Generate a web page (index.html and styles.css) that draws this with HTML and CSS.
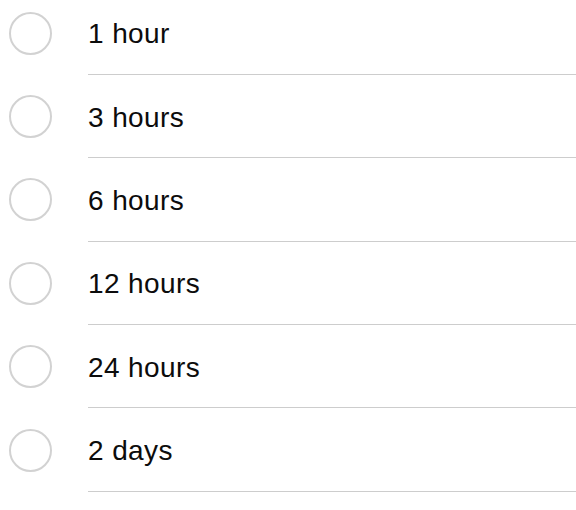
FILE: index.html
```html
<!DOCTYPE html>
<html lang="en">
<head>
  <title>Duration</title>
  <meta charset="UTF-8">
  <meta name="viewport" content="width=device-width, initial-scale=1">
  <link rel="stylesheet" href="styles.css">
</head>
<body>
  <ul class="options">
    <li class="option"><span class="radio"></span><span class="label">1 hour</span></li>
    <li class="option"><span class="radio"></span><span class="label">3 hours</span></li>
    <li class="option"><span class="radio"></span><span class="label">6 hours</span></li>
    <li class="option"><span class="radio"></span><span class="label">12 hours</span></li>
    <li class="option"><span class="radio"></span><span class="label">24 hours</span></li>
    <li class="option"><span class="radio"></span><span class="label">2 days</span></li>
  </ul>
</body>
</html>
```

FILE: styles.css
```css
/* page */
body {
  margin: 0;
  background: #fff;
  font-family: "Liberation Sans", Arial, Helvetica, sans-serif;
  color: #0c0c0c;
  overflow: hidden;
}

/* list of choices */
.options {
  list-style: none;
  margin: -8.5px 0 0 0;
  padding: 0;
}

.option {
  display: flex;
  align-items: stretch;
  height: 83.4px;
}

/* round radio button */
.radio {
  flex: 0 0 auto;
  box-sizing: border-box;
  width: 43px;
  height: 43px;
  margin: auto 36px auto 9px;
  border: 2.5px solid #d2d2d2;
  border-radius: 50%;
}

/* label with divider under it */
.label {
  flex: 1;
  display: flex;
  align-items: center;
  padding-top: 3px;
  font-size: 28px;
  letter-spacing: 0.4px;
  border-bottom: 1.5px solid #cdcdcd;
}
```
